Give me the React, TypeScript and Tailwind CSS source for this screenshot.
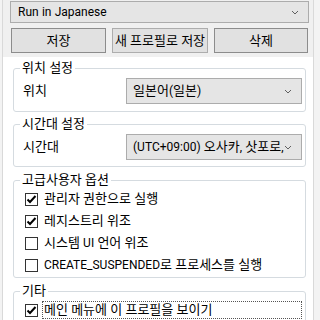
import type { ReactNode } from 'react';

const FONT = { fontFamily: 'Roboto, "Noto Sans CJK KR", sans-serif' };

// Latin runs are set a bit smaller so they keep the narrow width of the original UI font
function Txt({ s }: { s: string }) {
  const parts = s.split(/([\x21-\x7e]+)/);
  return (
    <>
      {parts.map((p, i) =>
        i % 2 === 1 ? (
          <span key={i} className="text-[12px]">
            {p}
          </span>
        ) : (
          p
        ),
      )}
    </>
  );
}

function Chevron() {
  return (
    <svg width="8" height="5" viewBox="0 0 8 5" className="shrink-0">
      <path d="M1 1 L4 4 L7 1" fill="none" stroke="#606060" strokeWidth="1" />
    </svg>
  );
}

function Combo({ text, className }: { text: string; className: string }) {
  return (
    <div
      className={[
        'flex min-w-0 items-center border border-[#acacac] bg-[#e5e5e5] pl-[6px] pr-[9px] text-black',
        className,
      ].join(' ')}
    >
      <span className="min-w-0 flex-1 overflow-hidden whitespace-nowrap">
        <Txt s={text} />
      </span>
      <Chevron />
    </div>
  );
}

function Button({ label, className }: { label: string; className: string }) {
  return (
    <div
      className={[
        'flex h-[25px] items-center justify-center border bg-[#e1e1e1] text-black',
        className,
      ].join(' ')}
    >
      {label}
    </div>
  );
}

function Group({ title, children, className }: { title: string; children: ReactNode; className: string }) {
  return (
    <fieldset className={['min-w-0 rounded-[3px] border border-[#d5dbe0]', className].join(' ')}>
      <legend className="ml-[6px] px-[2px] leading-[14px]">{title}</legend>
      {children}
    </fieldset>
  );
}

function Check({ checked, label, focused }: { checked: boolean; label: string; focused?: boolean }) {
  return (
    <div className="flex h-[22px] items-center pl-[11px]">
      <div className="flex h-[13px] w-[13px] shrink-0 items-center justify-center border border-[#333333] bg-white">
        {checked ? (
          <svg width="11" height="11" viewBox="0 0 11 11">
            <path d="M1.5 5.5 L4 8 L9.5 2" fill="none" stroke="#000" strokeWidth="2" />
          </svg>
        ) : null}
      </div>
      <span
        className={[
          'ml-[4px] whitespace-nowrap leading-[16px]',
          focused ? 'mr-[3px] flex-1 border border-dotted border-[#555] pl-[1px]' : 'pl-[2px]',
        ].join(' ')}
      >
        <Txt s={label} />
      </span>
    </div>
  );
}

export default function App() {
  return (
    <div className="flex h-[320px] w-[320px] overflow-hidden bg-[#f0f0f0] text-[13px] text-black" style={FONT}>
      <div className="w-[2px] shrink-0 bg-[#f3f3f3]" />
      <div className="w-[1px] shrink-0 bg-[#d9d9d9]" />

      <div className="flex w-[310px] shrink-0 flex-col">
        <div className="flex h-[57px] shrink-0 flex-col pl-[7px] pr-[4px]">
          <Combo text="Run in Japanese" className="mt-[1px] h-[22px] pl-[7px]" />
          <div className="mt-[5px] flex gap-[6px] pl-[1px] pr-[1px]">
            <Button label="저장" className="w-[95px] border-[#8c8c8c]" />
            <Button label="새 프로필로 저장" className="w-[96px] border-[#adadad]" />
            <Button label="삭제" className="w-[94px] border-[#8c8c8c]" />
          </div>
        </div>

        <div className="flex min-w-0 flex-1 flex-col bg-white pl-[10px] pr-[7px] pt-[4px]">
          <Group title="위치 설정" className="h-[51px]">
            <div className="mt-[3px] flex items-center pr-[3px]">
              <span className="w-[112px] shrink-0 pl-[9px]">위치</span>
              <Combo text="일본어(일본)" className="h-[26px] flex-1" />
            </div>
          </Group>

          <Group title="시간대 설정" className="mt-[5px] h-[50px]">
            <div className="mt-[3px] flex items-center pr-[3px]">
              <span className="w-[112px] shrink-0 pl-[9px]">시간대</span>
              <Combo text="(UTC+09:00) 오사카, 삿포로," className="h-[26px] flex-1" />
            </div>
          </Group>

          <Group title="고급사용자 옵션" className="mt-[6px] h-[105px]">
            <div className="mt-[1px] flex flex-col">
              <Check checked label="관리자 권한으로 실행" />
              <Check checked label="레지스트리 위조" />
              <Check checked={false} label="시스템 UI 언어 위조" />
              <Check checked={false} label="CREATE_SUSPENDED로 프로세스를 실행" />
            </div>
          </Group>

          <Group title="기타" className="mt-[6px] h-[60px]">
            <div className="mt-[1px] flex flex-col">
              <Check checked focused label="메인 메뉴에 이 프로필을 보이기" />
            </div>
          </Group>
        </div>
      </div>

      <div className="w-[1px] shrink-0 bg-[#d9d9d9]" />
      <div className="flex-1 bg-[#f3f3f3]" />
    </div>
  );
}
